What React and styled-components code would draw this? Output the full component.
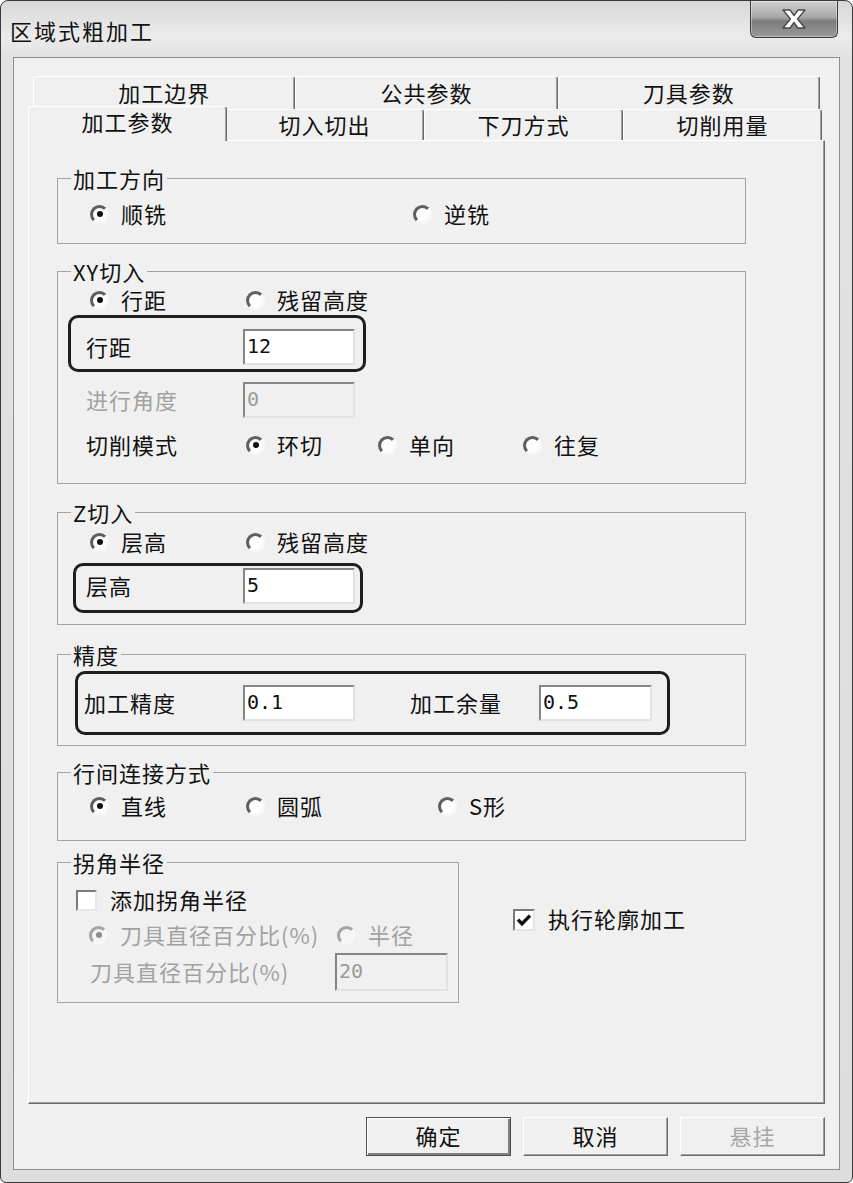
import React from "react"
import styled, { createGlobalStyle, css } from "styled-components"

const GlobalStyle = createGlobalStyle`
  html, body {
    margin: 0;
    padding: 0;
    background: #fff;
  }
  body {
    font-family: "Noto Sans CJK SC", "DejaVu Sans", sans-serif;
    color: #111;
  }
`

const Window = styled.div`
  width: 853px;
  height: 1183px;
  box-sizing: border-box;
  border: 1px solid #3a3a3a;
  border-radius: 8px 8px 6px 6px;
  background: linear-gradient(#d8d8d8, #ebebeb 36px, #e2e2e2 56px, #dddddd);
  display: flex;
  flex-direction: column;
  overflow: hidden;
`

const TitleBar = styled.div`
  height: 56px;
  flex: none;
  display: flex;
  justify-content: space-between;
  padding: 0 14px 0 9px;
`

const Title = styled.div`
  margin-top: 16px;
  font-size: 22px;
  line-height: 26px;
  letter-spacing: 2px;
`

const CloseButton = styled.div`
  width: 88px;
  height: 37px;
  box-sizing: border-box;
  border: 1px solid #3c3c3c;
  border-top: none;
  border-radius: 0 0 6px 6px;
  background: linear-gradient(#d0d0d0, #a8a8a8 45%, #7c7c7c 56%, #9a9a9a);
  box-shadow: inset 0 0 0 1px rgba(255, 255, 255, 0.35);
  display: flex;
  align-items: center;
  justify-content: center;
`

const Client = styled.div`
  flex: 1;
  margin: 0 12px 12px 12px;
  border: 1px solid #8e8e8e;
  background: #f0f0f0;
  padding: 18px 14px 13px 14px;
  display: flex;
  flex-direction: column;
`

const TabRow = styled.div`
  display: flex;
  height: ${(p) => p.$h}px;
  margin: 0 ${(p) => p.$mr}px 0 ${(p) => p.$ml}px;
`

const Tab = styled.div`
  flex: 1;
  position: relative;
  box-sizing: border-box;
  display: flex;
  align-items: center;
  justify-content: center;
  padding-bottom: 3px;
  background: #f0f0f0;
  border-top: 1px solid #fff;
  border-left: 1px solid #fff;
  border-right: 1px solid #6a6a6a;
  box-shadow: inset -1px 0 0 #a0a0a0;
  border-radius: 3px 3px 0 0;
  font-size: 22px;
  letter-spacing: 1px;
  ${(p) =>
    p.$active &&
    css`
      margin: -3px -2px -1px;
      z-index: 2;
      padding-bottom: 6px;
    `}
`

const Panel = styled.div`
  flex: 1;
  box-sizing: border-box;
  border-top: 1px solid #fff;
  border-left: 1px solid #fff;
  border-right: 1px solid #696969;
  border-bottom: 1px solid #696969;
  box-shadow: inset -1px -1px 0 #a0a0a0;
  padding: 25px 0 0 28px;
`

const Group = styled.fieldset`
  margin: ${(p) => p.$mt || 0}px 0 0 0;
  width: ${(p) => p.$w || 689}px;
  min-width: 0;
  box-sizing: border-box;
  border: 1px solid #a3a3a3;
  padding: ${(p) => p.$pt}px 0 ${(p) => p.$pb}px 10px;
  display: flex;
  flex-direction: column;
  flex: none;
`

const Legend = styled.legend`
  padding: 0 2px;
  margin-left: 3px;
  font-size: 22px;
  line-height: 24px;
  letter-spacing: 1px;
`

const Row = styled.div`
  display: flex;
  align-items: center;
  height: ${(p) => p.$h || 28}px;
  margin-top: ${(p) => p.$mt || 0}px;
  padding-left: ${(p) => p.$pl || 0}px;
`

const Callout = styled.div`
  display: flex;
  align-items: center;
  box-sizing: border-box;
  width: ${(p) => p.$w}px;
  height: ${(p) => p.$h}px;
  margin: ${(p) => p.$mt || 0}px 0 0 ${(p) => p.$ml || 0}px;
  padding: ${(p) => p.$pt || 0}px 0 ${(p) => p.$pb || 0}px ${(p) => p.$pl}px;
  border: 3px solid #1e1e1e;
  border-radius: 10px;
`

const Label = styled.span`
  width: ${(p) => (p.$w ? `${p.$w}px` : "auto")};
  margin-left: ${(p) => p.$ml || 0}px;
  padding-bottom: 3px;
  flex: none;
  font-size: 22px;
  letter-spacing: 1px;
  white-space: nowrap;
  color: ${(p) => (p.$disabled ? "#a2a2a2" : "#111")};
`

const Field = styled.input`
  width: ${(p) => p.$w || 112}px;
  height: ${(p) => p.$h || 36}px;
  box-sizing: border-box;
  margin: 0;
  padding: 0 0 3px 2px;
  border: 2px solid;
  border-color: #858585 #e2e2e2 #e2e2e2 #858585;
  background: ${(p) => (p.disabled ? "#f0f0f0" : "#fff")};
  font-family: "DejaVu Sans Mono", monospace;
  font-size: 20px;
  color: ${(p) => (p.disabled ? "#9a9a9a" : "#111")};
  outline: none;
  flex: none;
`

const Option = styled.label`
  display: flex;
  align-items: center;
  width: ${(p) => (p.$w ? `${p.$w}px` : "auto")};
  flex: none;
`

const RadioDot = styled.span`
  width: 19px;
  height: 19px;
  box-sizing: border-box;
  border-radius: 50%;
  border: 3px solid;
  border-color: ${(p) =>
    p.$disabled ? "#a4a4a4 #f6f6f6 #f6f6f6 #a4a4a4" : "#5e5e5e #f8f8f8 #f8f8f8 #5e5e5e"};
  background: ${(p) => (p.$disabled ? "#f4f4f4" : "#fdfdfd")};
  display: flex;
  align-items: center;
  justify-content: center;
  flex: none;
  margin-right: 12px;
  &::after {
    content: "";
    width: 6px;
    height: 6px;
    border-radius: 50%;
    background: ${(p) => (p.$disabled ? "#8c8c8c" : "#111")};
    display: ${(p) => (p.$on ? "block" : "none")};
  }
`

const CheckBox = styled.span`
  width: ${(p) => p.$size}px;
  height: ${(p) => p.$size}px;
  box-sizing: border-box;
  border: 2px solid;
  border-color: #7a7a7a #e6e6e6 #e6e6e6 #7a7a7a;
  background: #fff;
  display: flex;
  align-items: center;
  justify-content: center;
  flex: none;
  margin-right: 13px;
`

const BottomRow = styled.div`
  display: flex;
  align-items: flex-start;
  margin-top: 9px;
`

const SideCheck = styled.label`
  display: flex;
  align-items: center;
  margin: 52px 0 0 54px;
`

const ButtonBar = styled.div`
  display: flex;
  justify-content: flex-end;
  gap: 12px;
  margin-top: 13px;
  flex: none;
`

const Button = styled.div`
  width: 145px;
  height: 39px;
  box-sizing: border-box;
  display: flex;
  align-items: center;
  justify-content: center;
  padding-bottom: 3px;
  font-size: 22px;
  letter-spacing: 1px;
  background: #f0f0f0;
  border: 1px solid;
  border-color: #fff #6a6a6a #6a6a6a #fff;
  box-shadow: inset -1px -1px 0 #a0a0a0;
  color: ${(p) => (p.$disabled ? "#a6a6a6" : "#111")};
  ${(p) =>
    p.$default &&
    css`
      border-color: #4e4e4e;
      box-shadow: inset 1px 1px 0 #fff, inset -2px -2px 0 #808080;
    `}
`

function Radio({ on, disabled, w, children }) {
  return (
    <Option $w={w}>
      <RadioDot $on={on} $disabled={disabled} />
      <Label $disabled={disabled}>{children}</Label>
    </Option>
  )
}

function Check({ on, size = 21, children }) {
  return (
    <>
      <CheckBox $size={size}>
        {on && (
          <svg width="16" height="16" viewBox="0 0 16 16">
            <path d="M2 7.6 L6 11.8 L14 3.6" fill="none" stroke="#111" strokeWidth="3.4" />
          </svg>
        )}
      </CheckBox>
      <Label>{children}</Label>
    </>
  )
}

export default function App() {
  return (
    <>
      <GlobalStyle />
      <Window>
        <TitleBar>
          <Title>区域式粗加工</Title>
          <CloseButton>
            <svg width="28" height="22" viewBox="0 0 28 22">
              <path
                d="M3 2 H10 L14 7.5 L18 2 H25 L17.5 11 L25 20 H18 L14 14.5 L10 20 H3 L10.5 11 Z"
                fill="#fff"
                stroke="#474747"
                strokeWidth="1.3"
                strokeLinejoin="round"
              />
            </svg>
          </CloseButton>
        </TitleBar>

        <Client>
          <TabRow $h={33} $ml={5} $mr={5}>
            <Tab>加工边界</Tab>
            <Tab>公共参数</Tab>
            <Tab>刀具参数</Tab>
          </TabRow>
          <TabRow $h={31} $ml={2} $mr={3}>
            <Tab $active>加工参数</Tab>
            <Tab>切入切出</Tab>
            <Tab>下刀方式</Tab>
            <Tab>切削用量</Tab>
          </TabRow>

          <Panel>
            <Group $pt={10} $pb={15}>
              <Legend>加工方向</Legend>
              <Row $pl={22}>
                <Radio on w={323}>顺铣</Radio>
                <Radio>逆铣</Radio>
              </Row>
            </Group>

            <Group $mt={15} $pt={3} $pb={24}>
              <Legend>XY切入</Legend>
              <Row $pl={22}>
                <Radio on w={156}>行距</Radio>
                <Radio>残留高度</Radio>
              </Row>
              <Callout $mt={1} $w={298} $h={57} $pl={15} $pt={7}>
                <Label $w={157}>行距</Label>
                <Field readOnly defaultValue="12" />
              </Callout>
              <Row $mt={10} $h={36} $pl={18}>
                <Label $w={157} $disabled>
                  进行角度
                </Label>
                <Field disabled defaultValue="0" />
              </Row>
              <Row $mt={13} $pl={18}>
                <Label $w={160}>切削模式</Label>
                <Radio on w={132}>环切</Radio>
                <Radio w={145}>单向</Radio>
                <Radio>往复</Radio>
              </Row>
            </Group>

            <Group $mt={16} $pt={4} $pb={11}>
              <Legend>Z切入</Legend>
              <Row $pl={22}>
                <Radio on w={156}>层高</Radio>
                <Radio>残留高度</Radio>
              </Row>
              <Callout $mt={7} $ml={5} $w={290} $h={50} $pl={10} $pb={4}>
                <Label $w={157}>层高</Label>
                <Field readOnly defaultValue="5" />
              </Callout>
            </Group>

            <Group $mt={17} $pt={5} $pb={10}>
              <Legend>精度</Legend>
              <Callout $ml={7} $w={595} $h={64} $pl={6}>
                <Label $w={159}>加工精度</Label>
                <Field readOnly defaultValue="0.1" />
                <Label $w={129} $ml={55}>
                  加工余量
                </Label>
                <Field readOnly defaultValue="0.5" $w={113} />
              </Callout>
            </Group>

            <Group $mt={14} $pt={8} $pb={20}>
              <Legend>行间连接方式</Legend>
              <Row $pl={22}>
                <Radio on w={156}>直线</Radio>
                <Radio w={192}>圆弧</Radio>
                <Radio>S形</Radio>
              </Row>
            </Group>

            <BottomRow>
              <Group $w={402} $pt={12} $pb={11}>
                <Legend>拐角半径</Legend>
                <Row $pl={8}>
                  <Check>添加拐角半径</Check>
                </Row>
                <Row $mt={7} $pl={21}>
                  <Radio on disabled w={248}>
                    刀具直径百分比(%)
                  </Radio>
                  <Radio disabled>半径</Radio>
                </Row>
                <Row $mt={4} $h={38} $pl={22}>
                  <Label $w={245} $disabled>
                    刀具直径百分比(%)
                  </Label>
                  <Field disabled defaultValue="20" $w={113} $h={38} />
                </Row>
              </Group>
              <SideCheck>
                <Check on size={22}>
                  执行轮廓加工
                </Check>
              </SideCheck>
            </BottomRow>
          </Panel>

          <ButtonBar>
            <Button $default>确定</Button>
            <Button>取消</Button>
            <Button $disabled>悬挂</Button>
          </ButtonBar>
        </Client>
      </Window>
    </>
  )
}
